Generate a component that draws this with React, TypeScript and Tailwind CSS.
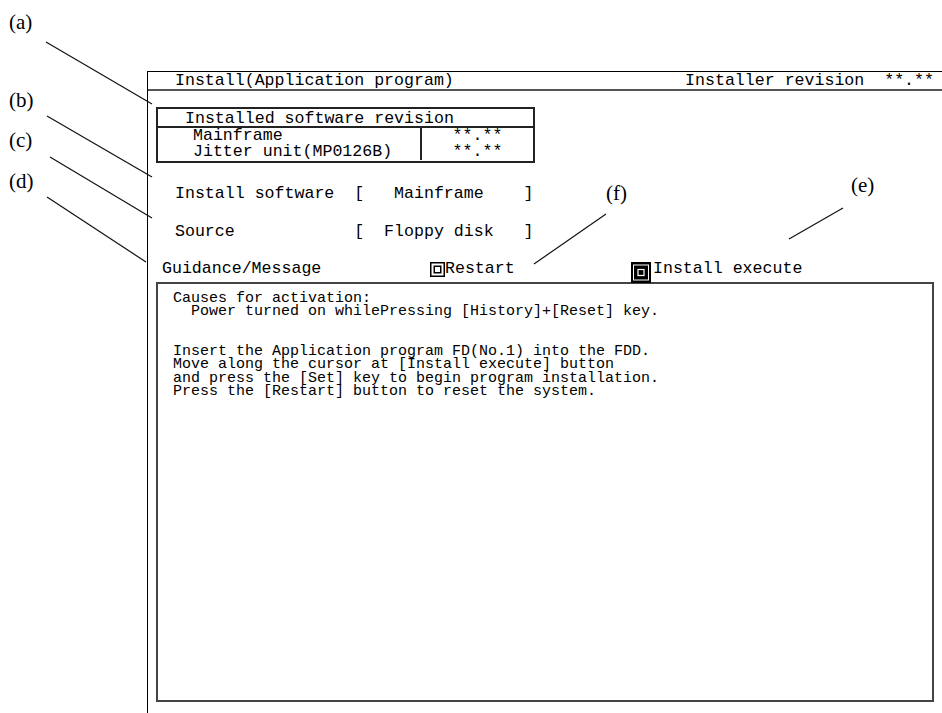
import React from 'react'

const callouts = [
  { label: '(a)', x: 9, y: 11 },
  { label: '(b)', x: 9, y: 89 },
  { label: '(c)', x: 9, y: 129 },
  { label: '(d)', x: 9, y: 170 },
  { label: '(e)', x: 851, y: 174 },
  { label: '(f)', x: 606, y: 182 },
]

const leaders = [
  [46, 42, 152, 104],
  [47, 116, 152, 177],
  [50, 157, 152, 218],
  [47, 197, 146, 262],
  [534, 264, 606, 214],
  [789, 239, 843, 208],
]

function Callouts() {
  return (
    <>
      <svg className="pointer-events-none absolute inset-0 z-20" width={942} height={713}>
        {leaders.map(([x1, y1, x2, y2], i) => (
          <line key={i} x1={x1} y1={y1} x2={x2} y2={y2} stroke="#111" strokeWidth={1.2} />
        ))}
      </svg>
      {callouts.map((c) => (
        <span
          key={c.label}
          className="absolute z-20 font-['Liberation_Serif',serif] text-[21px] leading-[22px]"
          style={{ left: c.x, top: c.y }}
        >
          {c.label}
        </span>
      ))}
    </>
  )
}

// the 回 mark in front of a button
function ButtonMark() {
  return (
    <svg width={15} height={15} viewBox="0 0 15 15" className="shrink-0">
      <rect x={0.75} y={0.75} width={13.5} height={13.5} fill="none" stroke="#000" strokeWidth={1.5} />
      <rect x={4.25} y={4.25} width={6.5} height={6.5} fill="none" stroke="#000" strokeWidth={1.5} />
    </svg>
  )
}

// same mark, highlighted by the cursor
function ButtonMarkSelected() {
  return (
    <svg width={20} height={21} viewBox="0 0 20 21" className="relative z-10 shrink-0">
      <rect x={0} y={0} width={20} height={21} fill="#000" />
      <rect x={2.5} y={3} width={15} height={15} fill="none" stroke="#fff" strokeWidth={1} />
      <rect x={7} y={7.5} width={6} height={6} fill="none" stroke="#fff" strokeWidth={1.2} />
    </svg>
  )
}

const message = [
  'Causes for activation:',
  '  Power turned on whilePressing [History]+[Reset] key.',
  '',
  '',
  'Insert the Application program FD(No.1) into the FDD.',
  'Move along the cursor at [Install execute] button',
  'and press the [Set] key to begin program installation.',
  'Press the [Restart] button to reset the system.',
]

export default function App() {
  return (
    <div className="relative h-[713px] w-[942px] overflow-hidden bg-white text-black">
      <Callouts />

      <div className="ml-[147px] mt-[71px] flex h-[642px] flex-col border-l border-t border-black font-['Liberation_Mono',monospace] text-[16.6px]">
        <header className="flex h-[19px] shrink-0 items-center justify-between border-b-2 border-[#555] pl-[27px] pr-[8px] leading-[17px]">
          <span>Install(Application program)</span>
          <span className="whitespace-pre">Installer revision  **.**</span>
        </header>

        <div className="flex flex-col pl-[8px]">
          {/* installed software revision */}
          <div className="mt-[16px] w-[379px] border-2 border-[#222]">
            <div className="h-[19px] border-b-2 border-[#222] pl-[27px] pt-[1px] leading-[17px]">
              Installed software revision
            </div>
            <div className="grid grid-cols-[264px_1fr] pb-[1px] leading-[16px]">
              <div className="border-r-2 border-[#222] pl-[35px]">
                <div>Mainframe</div>
                <div>Jitter unit(MP0126B)</div>
              </div>
              <div className="text-center">
                <div>**.**</div>
                <div>**.**</div>
              </div>
            </div>
          </div>

          <div className="mt-[21px] whitespace-pre pl-[19px] leading-[20px]">
            <div>Install software  [   Mainframe    ]</div>
            <div className="mt-[18px]">Source            [  Floppy disk   ]</div>
          </div>

          <div className="mt-[17px] flex h-[23px] items-start pl-[6px] leading-[20px]">
            <span className="w-[268px]">Guidance/Message</span>
            <span className="flex w-[201px] items-start">
              <span className="mt-[3px]"><ButtonMark /></span>
              <span>Restart</span>
            </span>
            <span className="flex items-start">
              <span className="mt-[3px]"><ButtonMarkSelected /></span>
              <span className="ml-[2px]">Install execute</span>
            </span>
          </div>

          <div className="h-[420px] w-[778px] whitespace-pre border-2 border-[#444] pl-[15px] pt-[8px] text-[15px] leading-[13.3px]">
            {message.map((line, i) => (
              <div key={i} className="h-[13.3px]">{line}</div>
            ))}
          </div>
        </div>
      </div>
    </div>
  )
}
